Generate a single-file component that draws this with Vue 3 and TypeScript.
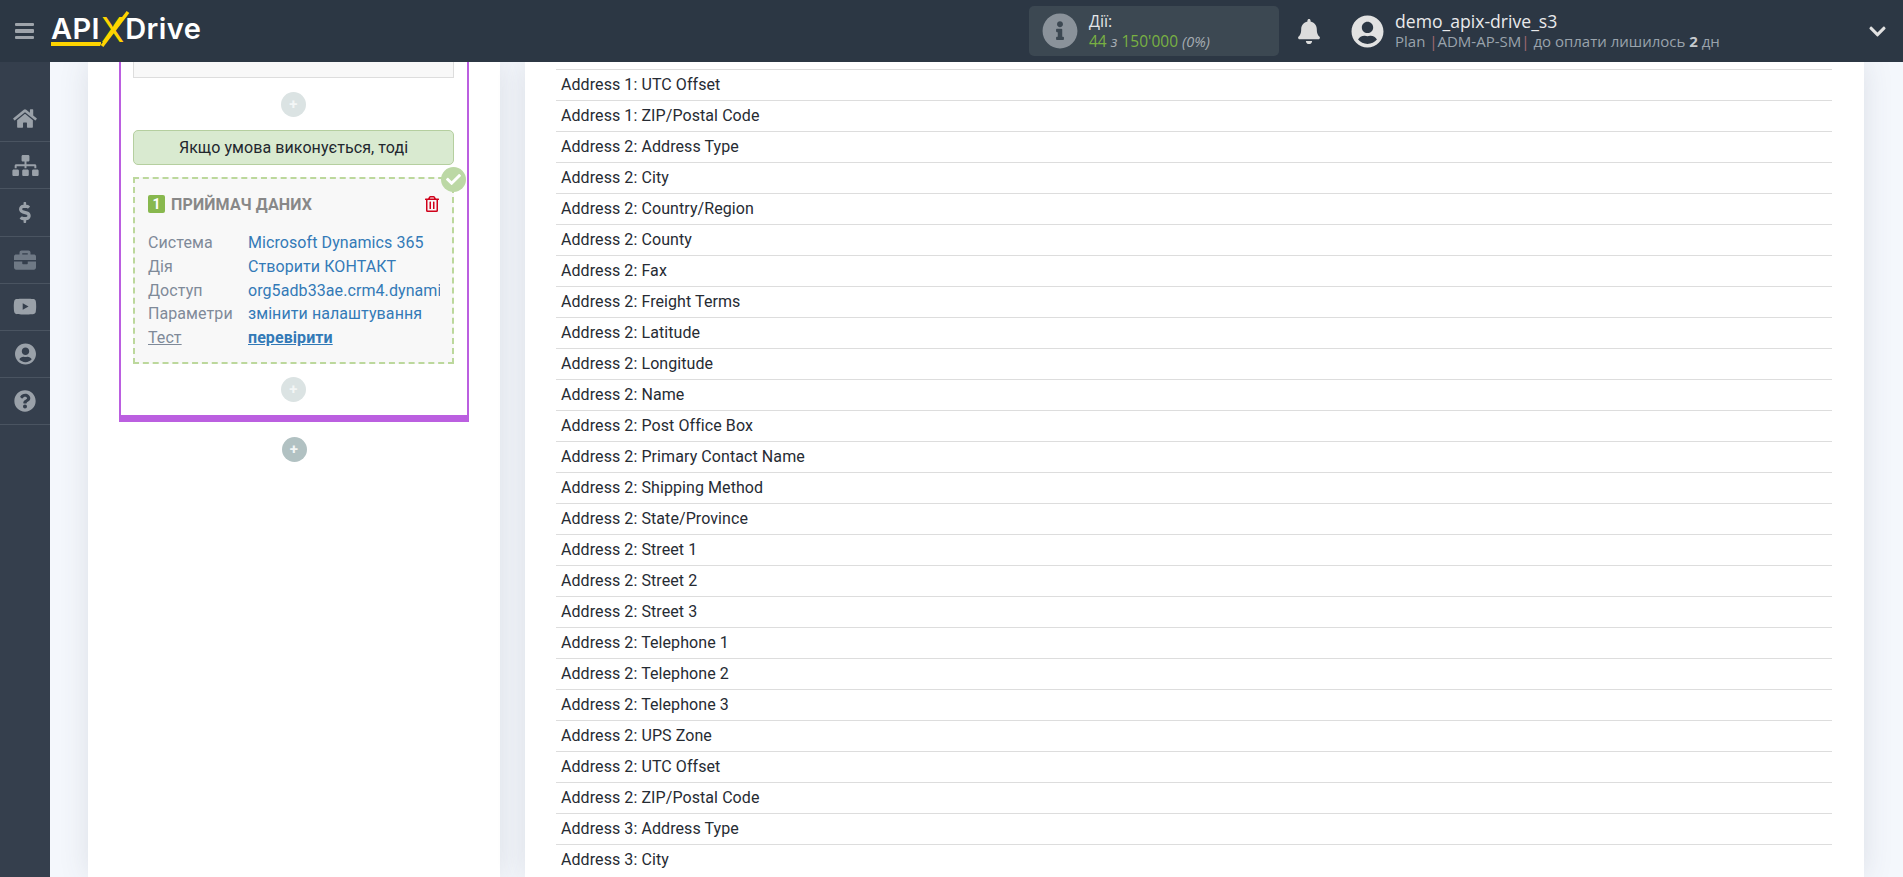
<script setup lang="ts">
interface NavIcon { box: string; d: string; w: number; h: number; dim?: boolean }
const nav: NavIcon[] = [
  { box: '0 0 576 512', w: 24, h: 21, d: 'M280.37 148.26L96 300.11V464a16 16 0 0 0 16 16l112.06-.29a16 16 0 0 0 15.92-16V368a16 16 0 0 1 16-16h64a16 16 0 0 1 16 16v95.64a16 16 0 0 0 16 16.05L464 480a16 16 0 0 0 16-16V300L295.67 148.26a12.19 12.19 0 0 0-15.3 0zM571.6 251.47L488 182.56V44.05a12 12 0 0 0-12-12h-56a12 12 0 0 0-12 12v72.61L318.47 43a48 48 0 0 0-61 0L4.34 251.47a12 12 0 0 0-1.6 16.9l25.5 31A12 12 0 0 0 45.15 301l235.22-193.74a12.19 12.19 0 0 1 15.3 0L530.9 301a12 12 0 0 0 16.9-1.6l25.5-31a12 12 0 0 0-1.7-16.93z' },
  { box: '0 0 640 512', w: 27, h: 21, d: 'M128 352H32c-17.67 0-32 14.33-32 32v96c0 17.67 14.33 32 32 32h96c17.67 0 32-14.33 32-32v-96c0-17.67-14.33-32-32-32zm-24-80h192v48h48v-48h192v48h48v-57.59c0-21.17-17.23-38.41-38.41-38.41H344v-64h40c17.67 0 32-14.33 32-32V32c0-17.67-14.33-32-32-32H256c-17.67 0-32 14.33-32 32v96c0 17.67 14.33 32 32 32h40v64H94.41C73.23 224 56 241.23 56 262.41V320h48v-48zm264 80h-96c-17.67 0-32 14.33-32 32v96c0 17.67 14.33 32 32 32h96c17.67 0 32-14.33 32-32v-96c0-17.67-14.33-32-32-32zm240 0h-96c-17.67 0-32 14.33-32 32v96c0 17.67 14.33 32 32 32h96c17.67 0 32-14.33 32-32v-96c0-17.67-14.33-32-32-32z' },
  { box: '0 0 320 512', w: 13, h: 21, d: 'M209.2 233.4l-108-31.6C88.7 198.2 80 186.5 80 173.5c0-16.3 13.2-29.5 29.5-29.5h66.3c12.2 0 24.2 3.7 34.2 10.5 6.1 4.1 14.3 3.1 19.5-2l34.8-34c7.1-6.9 6.1-18.4-1.8-24.5C238 74.8 207.4 64.1 176 64V16c0-8.8-7.2-16-16-16h-32c-8.8 0-16 7.2-16 16v48h-2.5C45.8 64-5.4 118.7.5 183.6c4.2 46.1 39.4 83.6 83.8 96.6l102.5 30c12.5 3.7 21.2 15.3 21.2 28.3 0 16.3-13.2 29.5-29.5 29.5h-66.3C100 368 88 364.3 78 357.5c-6.1-4.1-14.3-3.1-19.5 2l-34.8 34c-7.1 6.9-6.1 18.4 1.8 24.5 24.5 19.2 55.1 29.9 86.5 30v48c0 8.8 7.2 16 16 16h32c8.8 0 16-7.2 16-16v-48.2c46.6-.9 90.3-28.6 105.7-72.7 21.5-61.6-14.6-124.8-72.5-141.7z' },
  { box: '0 0 512 512', w: 22, h: 22, dim: true, d: 'M320 336c0 8.84-7.16 16-16 16h-96c-8.84 0-16-7.16-16-16v-48H0v144c0 25.6 22.4 48 48 48h416c25.6 0 48-22.4 48-48V288H320v48zm144-208h-80V80c0-25.6-22.4-48-48-48H176c-25.6 0-48 22.4-48 48v48H48c-25.6 0-48 22.4-48 48v80h512v-80c0-25.6-22.4-48-48-48zm-144 0H192V96h128v32z' },
  { box: '0 0 576 512', w: 24, h: 21, d: 'M549.655 124.083c-6.281-23.65-24.787-42.276-48.284-48.597C458.781 64 288 64 288 64S117.22 64 74.629 75.486c-23.497 6.322-42.003 24.947-48.284 48.597-11.412 42.867-11.412 132.305-11.412 132.305s0 89.438 11.412 132.305c6.281 23.65 24.787 41.5 48.284 47.821C117.22 448 288 448 288 448s170.78 0 213.371-11.486c23.497-6.321 42.003-24.171 48.284-47.821 11.412-42.867 11.412-132.305 11.412-132.305s0-89.438-11.412-132.305zm-317.51 213.508V175.185l142.739 81.205-142.739 81.201z' },
  { box: '0 0 496 512', w: 21, h: 22, d: 'M248 8C111 8 0 119 0 256s111 248 248 248 248-111 248-248S385 8 248 8zm0 96c48.6 0 88 39.4 88 88s-39.4 88-88 88-88-39.4-88-88 39.4-88 88-88zm0 344c-58.7 0-111.3-26.6-146.5-68.2 18.8-35.4 55.6-59.8 98.5-59.8 2.4 0 4.8.4 7.1 1.1 13 4.2 26.6 6.9 40.9 6.9 14.3 0 28-2.7 40.9-6.9 2.3-.7 4.7-1.1 7.1-1.1 42.9 0 79.7 24.4 98.5 59.8C359.3 421.4 306.7 448 248 448z' },
  { box: '0 0 512 512', w: 22, h: 22, d: 'M504 256c0 136.997-111.043 248-248 248S8 392.997 8 256C8 119.083 119.043 8 256 8s248 111.083 248 248zM262.655 90c-54.497 0-89.255 22.957-116.549 63.758-3.536 5.286-2.353 12.415 2.715 16.258l34.699 26.31c5.205 3.947 12.621 3.008 16.665-2.122 17.864-22.658 30.113-35.797 57.303-35.797 20.429 0 45.698 13.148 45.698 32.958 0 14.976-12.363 22.667-32.534 33.976C247.128 238.528 216 254.941 216 296v4c0 6.627 5.373 12 12 12h56c6.627 0 12-5.373 12-12v-1.333c0-28.462 83.186-29.647 83.186-106.667 0-58.002-60.165-102-116.531-102zM256 338c-25.365 0-46 20.635-46 46 0 25.364 20.635 46 46 46s46-20.636 46-46c0-25.365-20.635-46-46-46z' },
]

const details = [
  { label: 'Система', value: 'Microsoft Dynamics 365' },
  { label: 'Дія', value: 'Створити КОНТАКТ' },
  { label: 'Доступ', value: 'org5adb33ae.crm4.dynamics.com' },
  { label: 'Параметри', value: 'змінити налаштування' },
]

const rows = [
  'Address 1: UTC Offset', 'Address 1: ZIP/Postal Code', 'Address 2: Address Type', 'Address 2: City',
  'Address 2: Country/Region', 'Address 2: County', 'Address 2: Fax', 'Address 2: Freight Terms',
  'Address 2: Latitude', 'Address 2: Longitude', 'Address 2: Name', 'Address 2: Post Office Box',
  'Address 2: Primary Contact Name', 'Address 2: Shipping Method', 'Address 2: State/Province',
  'Address 2: Street 1', 'Address 2: Street 2', 'Address 2: Street 3', 'Address 2: Telephone 1',
  'Address 2: Telephone 2', 'Address 2: Telephone 3', 'Address 2: UPS Zone', 'Address 2: UTC Offset',
  'Address 2: ZIP/Postal Code', 'Address 3: Address Type', 'Address 3: City',
]
</script>

<template>
  <div class="page">
    <header class="topbar">
      <div class="burger"><i></i><i></i><i></i></div>
      <div class="logo">
        <span class="logo-api">API</span><span class="logo-x">X</span><span class="logo-drive">Drive</span>
        <svg class="logo-marks" width="90" height="50" viewBox="0 0 90 50">
          <polygon points="0,42 50,42 50,44 49,46 0,46" fill="#ffd400" />
          <line x1="51" y1="46" x2="77" y2="12" stroke="#ffd400" stroke-width="3.4" />
        </svg>
      </div>
      <div class="stats">
        <svg class="stats-icon" viewBox="0 0 512 512" width="36" height="36"><path fill="#8a929a" d="M256 8C119.043 8 8 119.083 8 256c0 136.997 111.043 248 248 248s248-111.003 248-248C504 119.083 392.957 8 256 8zm0 110c23.196 0 42 18.804 42 42s-18.804 42-42 42-42-18.804-42-42 18.804-42 42-42zm56 254c0 6.627-5.373 12-12 12h-88c-6.627 0-12-5.373-12-12v-24c0-6.627 5.373-12 12-12h12v-64h-12c-6.627 0-12-5.373-12-12v-24c0-6.627 5.373-12 12-12h64c6.627 0 12 5.373 12 12v100h12c6.627 0 12 5.373 12 12v24z"/></svg>
        <div class="stats-text">
          <div class="stats-title">Дії:</div>
          <div class="stats-line"><span class="green">44</span> <em class="small">з</em> <span class="green">150'000</span> <em>(0%)</em></div>
        </div>
      </div>
      <svg class="bell" viewBox="0 0 448 512" width="22" height="25"><path fill="#dcdcdc" d="M224 512c35.32 0 63.97-28.65 63.97-63.97H160.03C160.03 483.35 188.68 512 224 512zm215.39-149.71c-19.32-20.76-55.47-51.99-55.47-154.29 0-77.7-54.48-139.9-127.94-155.16V32c0-17.67-14.32-32-31.98-32s-31.98 14.33-31.98 32v20.84C118.56 68.1 64.08 130.3 64.08 208c0 102.3-36.15 133.53-55.47 154.29-6 6.45-8.66 14.16-8.61 21.71.11 16.4 12.98 32 32.1 32h383.8c19.12 0 32-15.6 32.1-32 .05-7.55-2.61-15.27-8.61-21.71z"/></svg>
      <svg class="avatar" viewBox="0 0 496 512" width="33" height="33"><path fill="#e2e2e2" d="M248 8C111 8 0 119 0 256s111 248 248 248 248-111 248-248S385 8 248 8zm0 96c48.6 0 88 39.4 88 88s-39.4 88-88 88-88-39.4-88-88 39.4-88 88-88zm0 344c-58.7 0-111.3-26.6-146.5-68.2 18.8-35.4 55.6-59.8 98.5-59.8 2.4 0 4.8.4 7.1 1.1 13 4.2 26.6 6.9 40.9 6.9 14.3 0 28-2.7 40.9-6.9 2.3-.7 4.7-1.1 7.1-1.1 42.9 0 79.7 24.4 98.5 59.8C359.3 421.4 306.7 448 248 448z"/></svg>
      <div class="user">
        <div class="user-name">demo_apix-drive_s3</div>
        <div class="user-plan">Plan <span class="sep">|</span>ADM-AP-SM<span class="sep">|</span> до оплати лишилось <b>2</b> дн</div>
      </div>
      <svg class="chevron" viewBox="0 0 448 512" width="17" height="19"><path fill="#e2e2e2" d="M207.029 381.476L12.686 187.132c-9.373-9.373-9.373-24.569 0-33.941l22.667-22.667c9.357-9.357 24.522-9.375 33.901-.04L224 284.505l154.745-154.021c9.379-9.335 24.544-9.317 33.901.04l22.667 22.667c9.373 9.373 9.373 24.569 0 33.941L240.971 381.476c-9.373 9.372-24.569 9.372-33.942 0z"/></svg>
    </header>

    <div class="body">
      <nav class="sidebar">
        <div v-for="(item, i) in nav" :key="i" class="nav-item">
          <svg :class="{ dim: item.dim }" :viewBox="item.box" :width="item.w" :height="item.h"><path fill="currentColor" :d="item.d" /></svg>
        </div>
      </nav>

      <main class="content">
        <section class="panel left">
          <div class="flow">
            <div class="stub"></div>
            <div class="add light">+</div>
            <div class="condition">Якщо умова виконується, тоді</div>
            <div class="receiver">
              <span class="check">
                <svg viewBox="0 0 512 512" width="15" height="15"><path fill="#fff" d="M173.898 439.404l-166.4-166.4c-9.997-9.997-9.997-26.206 0-36.204l36.203-36.204c9.997-9.998 26.207-9.998 36.204 0L192 312.69 432.095 72.596c9.997-9.997 26.207-9.997 36.204 0l36.203 36.204c9.997 9.997 9.997 26.206 0 36.204l-294.4 294.401c-9.998 9.997-26.207 9.997-36.204-.001z"/></svg>
              </span>
              <div class="receiver-head">
                <span class="badge">1</span>
                <span class="receiver-title">ПРИЙМАЧ ДАНИХ</span>
                <svg class="trash" viewBox="0 0 448 512" width="14" height="16"><path fill="#d0021b" d="M268 416h24a12 12 0 0 0 12-12V188a12 12 0 0 0-12-12h-24a12 12 0 0 0-12 12v216a12 12 0 0 0 12 12zM432 80h-82.41l-34-56.7A48 48 0 0 0 274.41 0H173.59a48 48 0 0 0-41.16 23.3L98.41 80H16A16 16 0 0 0 0 96v16a16 16 0 0 0 16 16h16v336a48 48 0 0 0 48 48h288a48 48 0 0 0 48-48V128h16a16 16 0 0 0 16-16V96a16 16 0 0 0-16-16zM171.84 50.91A6 6 0 0 1 177 48h94a6 6 0 0 1 5.15 2.91L293.61 80H154.39zM368 464H80V128h288zm-212-48h24a12 12 0 0 0 12-12V188a12 12 0 0 0-12-12h-24a12 12 0 0 0-12 12v216a12 12 0 0 0 12 12z"/></svg>
              </div>
              <dl class="details">
                <div v-for="d in details" :key="d.label" class="detail">
                  <dt>{{ d.label }}</dt>
                  <dd>{{ d.value }}</dd>
                </div>
                <div class="detail test">
                  <dt>Тест</dt>
                  <dd>перевірити</dd>
                </div>
              </dl>
            </div>
            <div class="add light last">+</div>
          </div>
          <div class="add dark">+</div>
        </section>

        <section class="panel right">
          <div v-for="r in rows" :key="r" class="row">{{ r }}</div>
        </section>
      </main>
    </div>
  </div>
</template>

<style scoped>
.page {
  height: 877px;
  display: flex;
  flex-direction: column;
  overflow: hidden;
  font-family: Roboto, "Liberation Sans", sans-serif;
  letter-spacing: 0.08px;
  background: #f4f7fc;
}
.topbar {
  flex: 0 0 62px;
  display: flex;
  align-items: center;
  background: #2c3744;
  font-family: "Open Sans", "Liberation Sans", sans-serif;
  letter-spacing: 0;
  position: relative;
  z-index: 2;
}
.burger {
  width: 19px;
  margin-left: 15px;
  margin-right: 1px;
  display: flex;
  flex-direction: column;
  gap: 3.5px;
}
.burger i {
  display: block;
  height: 3.3px;
  border-radius: 1px;
  background: #9ea4ab;
}
.logo {
  position: relative;
  margin-left: 16px;
  width: 160px;
  height: 62px;
  box-sizing: border-box;
  padding-bottom: 5px;
  display: flex;
  align-items: center;
  font-family: Inter, "Open Sans", sans-serif;
  font-weight: 600;
  font-size: 29px;
  color: #fff;
  line-height: 1;
  letter-spacing: 0.4px;
}
.logo-x {
  color: #ffd400;
  font-size: 34px;
  font-weight: 400;
  letter-spacing: 0;
  margin: 2px 1px 0 1px;
}
.logo-marks {
  position: absolute;
  left: 0;
  top: 0;
}
.stats {
  margin-left: 818px;
  width: 250px;
  height: 50px;
  box-sizing: border-box;
  padding-left: 13px;
  border-radius: 5px;
  background: #3c4852;
  display: flex;
  align-items: center;
  gap: 11px;
}
.stats-text { line-height: 20px; }
.stats-title { font-size: 16px; color: #e4e6e8; }
.stats-line { font-size: 15.5px; color: #a6adb3; }
.stats-line em { font-size: 14.5px; }
.stats-line em.small { font-size: 15px; }
.green { color: #79b142; }
.bell { margin-left: 19px; }
.avatar { margin-left: 31px; }
.user { margin-left: 11px; line-height: 20px; }
.user-name { font-size: 17.6px; color: #e9eaec; }
.user-plan { font-size: 15px; color: #9aa3ac; }
.user-plan b { color: #c6cace; }
.sep { color: #a56a70; }
.chevron { margin-left: auto; margin-right: 17px; }

.body {
  flex: 1;
  display: flex;
  min-height: 0;
}
.sidebar {
  flex: 0 0 50px;
  padding-top: 33px;
  background: #353f4d;
  box-sizing: border-box;
}
.nav-item {
  height: 47.2px;
  box-sizing: border-box;
  border-bottom: 1px solid #4a5461;
  display: flex;
  align-items: center;
  justify-content: center;
  color: #9aa1a9;
}
.nav-item .dim { color: #6f7985; }
.content {
  flex: 1;
  display: flex;
  min-width: 0;
  padding: 0 39px 0 38px;
  gap: 25px;
}
.panel {
  background: #fff;
  box-shadow: 0 0 28px rgba(60, 70, 85, 0.13);
}
.left {
  flex: 0 0 412px;
  min-width: 0;
  box-sizing: border-box;
  padding: 0 31px;
}
.flow {
  box-sizing: border-box;
  border: 2px solid #bb5fe0;
  border-top: 0;
  border-bottom-width: 7px;
  padding: 0 13px 13px 12px;
}
.stub {
  height: 16px;
  background: #f8f8f8;
  border: 1px solid #ddd;
  border-top: 0;
  box-sizing: border-box;
}
.add {
  width: 25px;
  height: 25px;
  border-radius: 50%;
  margin: 14px auto 0;
  color: #f3f6f6;
  font-size: 15px;
  font-weight: 700;
  line-height: 25px;
  text-align: center;
}
.add.light { background: #dbe3e3; }
.add.dark { background: #b1c1c2; margin-top: 15px; }
.condition {
  margin-top: 13px;
  height: 35px;
  box-sizing: border-box;
  border: 1px solid #b5cf9f;
  border-radius: 5px;
  background: #d9ead0;
  color: #22272e;
  font-size: 16px;
  line-height: 33px;
  text-align: center;
}
.receiver {
  position: relative;
  margin-top: 12px;
  height: 187px;
  box-sizing: border-box;
  border: 2px dashed #bcd89c;
  background: #f8f8f8;
  padding: 15px 13px 0 13px;
}
.check {
  position: absolute;
  top: -12px;
  right: -14px;
  width: 25px;
  height: 25px;
  border-radius: 50%;
  background: #bcd8a5;
  display: flex;
  align-items: center;
  justify-content: center;
}
.receiver-head {
  display: flex;
  align-items: center;
  height: 20px;
}
.badge {
  width: 17px;
  height: 18px;
  border-radius: 2px;
  background: #88b84e;
  color: #fff;
  font-size: 14px;
  font-weight: 700;
  line-height: 18px;
  text-align: center;
}
.receiver-title {
  margin-left: 6px;
  font-size: 16px;
  font-weight: 700;
  letter-spacing: 0.15px;
  color: #888;
}
.trash { margin-left: auto; }
.details {
  margin: 17px 0 0;
}
.detail {
  display: flex;
  height: 23.8px;
  line-height: 23.8px;
  font-size: 16px;
}
.detail dt {
  flex: 0 0 100px;
  color: #7f8a99;
}
.detail dd {
  margin: 0;
  flex: 0 0 192px;
  width: 192px;
  overflow: hidden;
  white-space: nowrap;
  color: #337ab7;
}
.test dt { text-decoration: underline; }
.test dd { font-weight: 700; text-decoration: underline; }
.last { margin-top: 13px; }
.right {
  flex: 1;
  min-width: 0;
  padding: 7px 32px 0 31px;
  overflow: hidden;
}
.row {
  height: 31px;
  box-sizing: border-box;
  border-top: 1px solid #ddd;
  padding-left: 5px;
  font-size: 16px;
  line-height: 30px;
  color: #262b33;
}
</style>

<style>
html, body { margin: 0; padding: 0; overflow: hidden; }
</style>
